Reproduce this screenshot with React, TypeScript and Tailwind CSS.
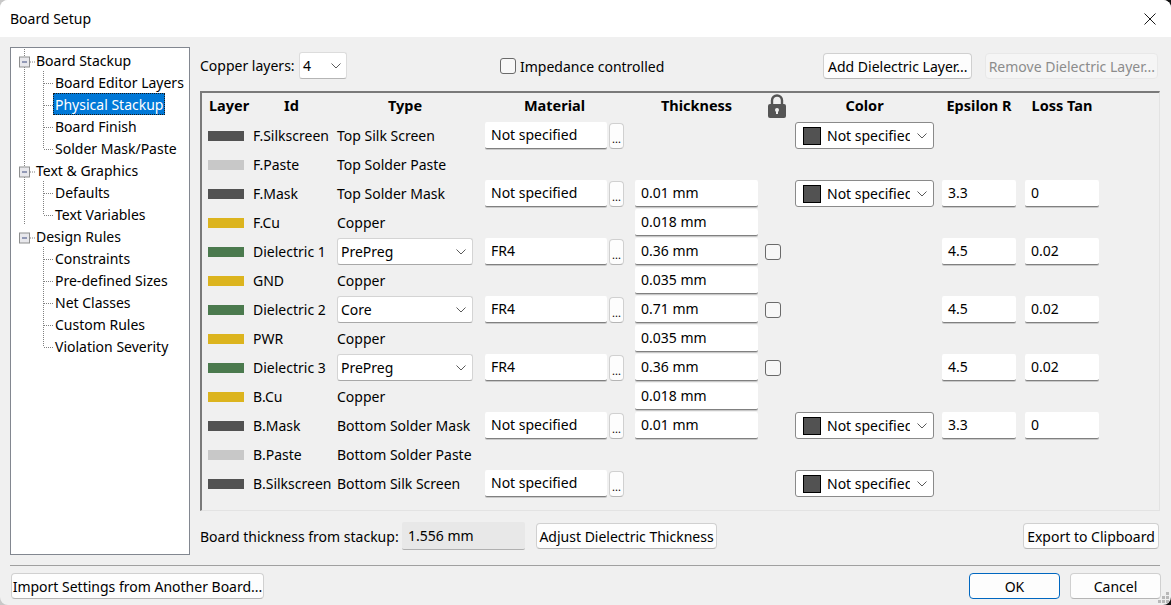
import React from "react";

const DARK = "#525252";
const PASTE = "#c8c8c8";
const COPPER = "#dcb41e";
const DIEL = "#4b7a4e";

interface Row {
  swatch: string;
  id: string;
  type: string;
  typeSelect?: boolean;
  material?: string;
  thickness?: string;
  lock?: boolean;
  color?: boolean;
  epsilon?: string;
  loss?: string;
}

const rows: Row[] = [
  { swatch: DARK, id: "F.Silkscreen", type: "Top Silk Screen", material: "Not specified", color: true },
  { swatch: PASTE, id: "F.Paste", type: "Top Solder Paste" },
  { swatch: DARK, id: "F.Mask", type: "Top Solder Mask", material: "Not specified", thickness: "0.01 mm", color: true, epsilon: "3.3", loss: "0" },
  { swatch: COPPER, id: "F.Cu", type: "Copper", thickness: "0.018 mm" },
  { swatch: DIEL, id: "Dielectric 1", type: "PrePreg", typeSelect: true, material: "FR4", thickness: "0.36 mm", lock: true, epsilon: "4.5", loss: "0.02" },
  { swatch: COPPER, id: "GND", type: "Copper", thickness: "0.035 mm" },
  { swatch: DIEL, id: "Dielectric 2", type: "Core", typeSelect: true, material: "FR4", thickness: "0.71 mm", lock: true, epsilon: "4.5", loss: "0.02" },
  { swatch: COPPER, id: "PWR", type: "Copper", thickness: "0.035 mm" },
  { swatch: DIEL, id: "Dielectric 3", type: "PrePreg", typeSelect: true, material: "FR4", thickness: "0.36 mm", lock: true, epsilon: "4.5", loss: "0.02" },
  { swatch: COPPER, id: "B.Cu", type: "Copper", thickness: "0.018 mm" },
  { swatch: DARK, id: "B.Mask", type: "Bottom Solder Mask", material: "Not specified", thickness: "0.01 mm", color: true, epsilon: "3.3", loss: "0" },
  { swatch: PASTE, id: "B.Paste", type: "Bottom Solder Paste" },
  { swatch: DARK, id: "B.Silkscreen", type: "Bottom Silk Screen", material: "Not specified", color: true },
];

const tree = [
  { label: "Board Stackup", more: true, children: ["Board Editor Layers", "Physical Stackup", "Board Finish", "Solder Mask/Paste"] },
  { label: "Text & Graphics", more: true, children: ["Defaults", "Text Variables"] },
  { label: "Design Rules", more: false, children: ["Constraints", "Pre-defined Sizes", "Net Classes", "Custom Rules", "Violation Severity"] },
];

function Chevron() {
  return (
    <svg width="10" height="6" viewBox="0 0 10 6" className="shrink-0">
      <path d="M0.5 0.5 L5 5 L9.5 0.5" fill="none" stroke="#5a5a5a" strokeWidth="1" />
    </svg>
  );
}

function Button({ children, className = "", primary }: { children: React.ReactNode; className?: string; primary?: boolean }) {
  const border = primary ? "border-[#0067c0]" : "border-[#d0d0d0] border-b-[#b5b5b5]";
  return (
    <div className={`flex h-[26px] items-center justify-center whitespace-nowrap rounded-[4px] border bg-[#fdfdfd] ${border} ${className}`}>
      {children}
    </div>
  );
}

function TextInput({ value, width }: { value: string; width: string }) {
  return (
    <div className={`flex h-[27px] items-center rounded-[2px] border-b border-b-[#808080] bg-white pl-[6px] pb-px shadow-[0_1px_0_#c8c8c8] ${width}`}>
      {value}
    </div>
  );
}

function Checkbox() {
  return <div className="h-4 w-4 shrink-0 rounded-[3px] border border-[#6a6a6a] bg-[#f7f7f7]" />;
}

function LockIcon() {
  return (
    <svg width="18" height="24" viewBox="0 0 18 24">
      <path d="M4 11 V6.5 a5 5 0 0 1 10 0 V11" fill="none" stroke="#555555" strokeWidth="2.4" />
      <rect x="0" y="10" width="18" height="14" rx="2" fill="#555555" />
      <circle cx="9" cy="16" r="2" fill="#f0f0f0" />
      <rect x="8" y="16" width="2" height="4" fill="#f0f0f0" />
    </svg>
  );
}

function TreeGlyph({ group, continues, last }: { group: boolean; continues: boolean; last?: boolean }) {
  // connector drawing for a single 22px tree row, aligned to the tree's left inner edge
  const dots = { stroke: "#808080", strokeWidth: 1, strokeDasharray: "1 1", fill: "none" };
  return (
    <svg width="44" height="22" viewBox="0 0 44 22" className="absolute left-0 top-0">
      {continues && <path d="M13.5 0 V22" {...dots} />}
      {group ? (
        <>
          <path d="M19 13 H24" {...dots} />
          <rect x="8.5" y="8" width="10" height="10" fill="#e8e8ec" stroke="#8e8f8f" />
          <path d="M11 13 H16" stroke="#3c4a80" strokeWidth="1" />
        </>
      ) : (
        <>
          <path d={last ? "M32.5 0 V12" : "M32.5 0 V22"} {...dots} />
          <path d="M33 12.5 H42" {...dots} />
        </>
      )}
    </svg>
  );
}

function TreePanel() {
  return (
    <div className="h-[508px] w-[180px] shrink-0 border border-[#828790] bg-white pt-[1px]">
      {tree.map((g) => (
        <React.Fragment key={g.label}>
          <div className="relative flex h-[22px] items-center pl-[25px] whitespace-nowrap">
            <TreeGlyph group continues={g.more} />
            {g.label}
          </div>
          {g.children.map((c, i) => (
            <div key={c} className="relative flex h-[22px] items-center pl-[44px] whitespace-nowrap">
              <TreeGlyph group={false} continues={g.more} last={i === g.children.length - 1} />
              {c === "Physical Stackup" ? (
                <span className="-ml-[2px] flex h-[22px] items-center border border-dotted border-[#1a1a1a] bg-[#0078d7] px-px text-white">{c}</span>
              ) : (
                c
              )}
            </div>
          ))}
        </React.Fragment>
      ))}
    </div>
  );
}

function StackupRow({ row }: { row: Row }) {
  return (
    <>
      <div className="flex items-center">
        <div className="h-[10px] w-9" style={{ backgroundColor: row.swatch }} />
      </div>
      <div className="flex items-center whitespace-nowrap">{row.id}</div>
      <div className="flex items-center whitespace-nowrap">
        {row.typeSelect ? (
          <div className="flex h-[27px] w-[136px] items-center justify-between rounded-[3px] border border-[#d4d4d4] border-b-[#a8a8a8] bg-white pl-[3px] pr-[6px]">
            {row.type}
            <Chevron />
          </div>
        ) : (
          row.type
        )}
      </div>
      <div className="flex items-center gap-[2px]">
        {row.material && (
          <>
            <TextInput value={row.material} width="w-[122px]" />
            <div className="flex h-[26px] w-[15px] items-end justify-center rounded-[4px] border border-[#d0d0d0] border-b-[#b5b5b5] bg-[#fdfdfd] pb-[2px] text-[11px] leading-[14px]">...</div>
          </>
        )}
      </div>
      <div className="flex items-center">{row.thickness && <TextInput value={row.thickness} width="w-[123px]" />}</div>
      <div className="flex items-center pl-[7px]">{row.lock && <Checkbox />}</div>
      <div className="flex items-center">
        {row.color && (
          <div className="flex h-[27px] w-[139px] items-center rounded-[3px] border border-[#8a8a8a] bg-white pl-[7px] pr-[5px]">
            <div className="h-[18px] w-[18px] shrink-0 border border-black bg-[#525252]" />
            <span className="ml-[6px] w-[83px] overflow-hidden whitespace-nowrap">Not specified</span>
            <span className="ml-[7px]"><Chevron /></span>
          </div>
        )}
      </div>
      <div className="flex items-center">{row.epsilon && <TextInput value={row.epsilon} width="w-[74px]" />}</div>
      <div className="flex items-center">{row.loss && <TextInput value={row.loss} width="w-[74px]" />}</div>
    </>
  );
}

function StackupTable() {
  const head = "flex items-center justify-center pb-[3px] text-[14.5px] font-bold whitespace-nowrap";
  return (
    <div className="h-[420px] border border-t-2 border-l-2 border-[#e3e3e3] border-t-[#7a7a7a] border-l-[#7a7a7a] pl-[6px]">
      <div className="grid grid-cols-[45px_84px_148px_150px_123px_37px_147px_83px_74px] grid-rows-[28px] auto-rows-[29px]">
        <div className="flex items-center pb-[3px] pl-px text-[14.5px] font-bold">Layer</div>
        <div className={`${head} pr-[7px]`}>Id</div>
        <div className={`${head} pr-[12px]`}>Type</div>
        <div className={`${head} pr-[11px]`}>Material</div>
        <div className={head}>Thickness</div>
        <div className="flex items-center justify-center pb-[2px]"><LockIcon /></div>
        <div className={`${head} pr-[8px]`}>Color</div>
        <div className={`${head} pr-[9px]`}>Epsilon R</div>
        <div className={head}>Loss Tan</div>
        {rows.map((r) => (
          <StackupRow key={r.id} row={r} />
        ))}
      </div>
    </div>
  );
}

export default function App() {
  return (
    <div className="h-[605px] w-[1171px] overflow-hidden bg-gradient-to-r from-[#c8c8c8] to-[#101010]">
      <div
        className="relative flex h-[605px] w-[1171px] flex-col overflow-hidden rounded-[8px] bg-[#f0f0f0] text-[14px] text-black"
        style={{ fontFamily: '"Noto Sans", "Open Sans", sans-serif' }}
      >
        <div className="flex h-[37px] shrink-0 items-center justify-between bg-white pl-[10px] pr-[15px]">
          <span>Board Setup</span>
          <svg width="12" height="12" viewBox="0 0 12 12">
            <path d="M0.5 0.5 L11.5 11.5 M11.5 0.5 L0.5 11.5" stroke="#1a1a1a" strokeWidth="1" fill="none" />
          </svg>
        </div>

        <div className="flex gap-[10px] px-[10px] pt-[10px]">
          <TreePanel />
          <div className="flex w-[960px] flex-col">
            <div className="flex h-[44px] items-start pt-[5px]">
              <div className="flex h-[27px] w-[99px] items-center whitespace-nowrap">Copper layers:</div>
              <div className="flex h-[27px] w-[48px] items-center justify-between rounded-[3px] border border-[#dcdcdc] border-b-[#b5b5b5] bg-white pl-[3px] pr-[5px]">
                4
                <Chevron />
              </div>
              <div className="ml-[153px] flex h-[28px] items-center gap-[4px] whitespace-nowrap">
                <Checkbox />
                Impedance controlled
              </div>
              <Button className="ml-[159px] mt-px w-[149px]">Add Dielectric Layer...</Button>
              <div className="ml-[13px] mt-px flex h-[26px] w-[173px] items-center justify-center whitespace-nowrap rounded-[4px] border border-[#e8e8e8] bg-[#f5f5f5] text-[#8c8c8c]">
                Remove Dielectric Layer...
              </div>
            </div>
            <StackupTable />
            <div className="flex items-center pr-px pt-[11px]">
              <div className="w-[202px] whitespace-nowrap">Board thickness from stackup:</div>
              <div className="flex h-[28px] w-[123px] items-center rounded-[2px] border-b border-b-[#b0b0b0] bg-[#e8e8e8] pl-[6px]">1.556 mm</div>
              <Button className="ml-[11px] w-[181px]">Adjust Dielectric Thickness</Button>
              <Button className="ml-auto w-[136px]">Export to Clipboard</Button>
            </div>
          </div>
        </div>

        <div className="mx-[10px] mt-[10px] h-px w-[1150px] bg-[#a0a0a0]" />

        <div className="flex items-center pl-[11px] pr-[10px] pt-[7px]">
          <Button className="w-[253px]">Import Settings from Another Board...</Button>
          <Button primary className="ml-auto w-[91px]">OK</Button>
          <Button className="ml-[10px] w-[91px]">Cancel</Button>
        </div>

        <svg width="14" height="14" viewBox="0 0 14 14" className="absolute bottom-0 right-0">
          <g fill="#b8b8b8">
            <rect x="9" y="1" width="3" height="3" />
            <rect x="5" y="5" width="3" height="3" />
            <rect x="9" y="5" width="3" height="3" />
            <rect x="1" y="9" width="3" height="3" />
            <rect x="5" y="9" width="3" height="3" />
            <rect x="9" y="9" width="3" height="3" />
          </g>
        </svg>
      </div>
    </div>
  );
}
